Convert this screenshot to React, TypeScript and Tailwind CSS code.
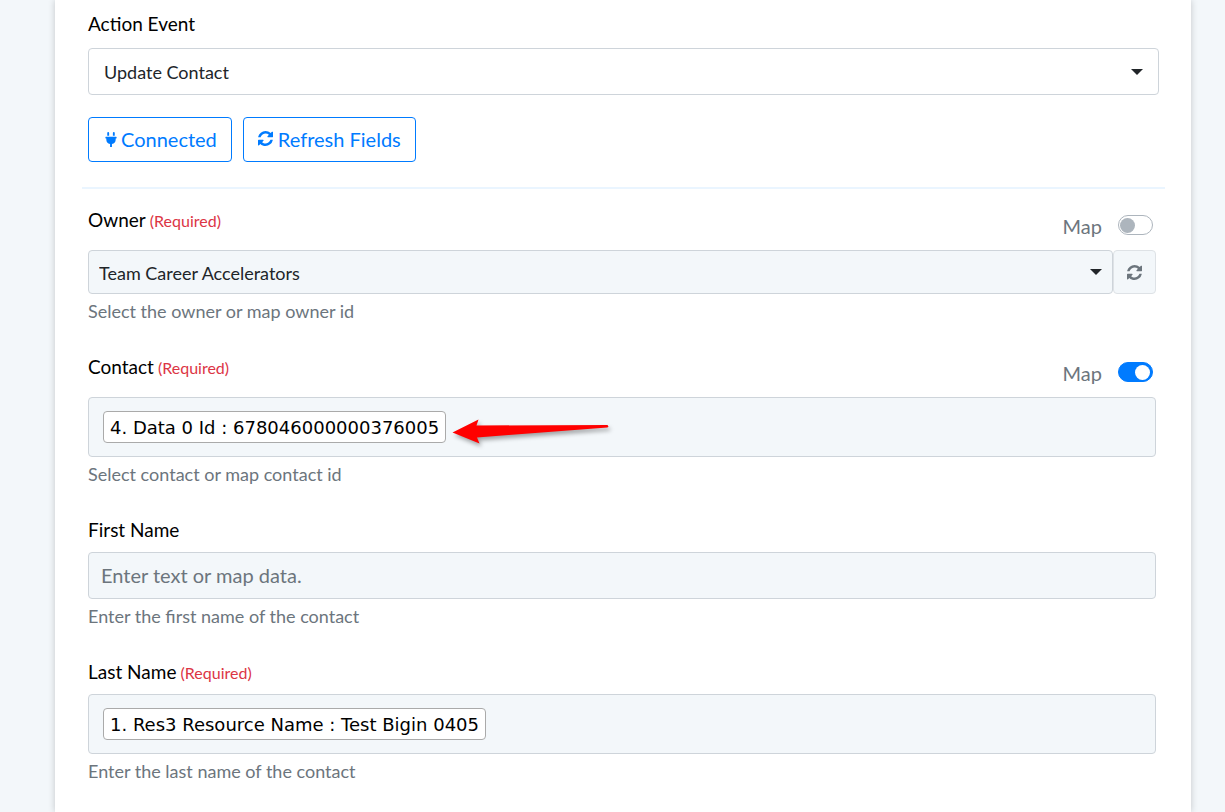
import { useState } from "react";
import type { ReactNode } from "react";
import { FaPlug } from "react-icons/fa";

function Caret({ className }: { className: string }) {
  return (
    <svg
      viewBox="0 0 12 6"
      className={`pointer-events-none absolute top-1/2 h-[6px] w-3 -translate-y-1/2 fill-[#212529] ${className}`}
      aria-hidden="true"
    >
      <path d="M0 0h12L6 6z" />
    </svg>
  );
}

function RefreshIcon() {
  return (
    <svg viewBox="0 0 1536 1536" className="size-[15px] shrink-0 fill-current" aria-hidden="true">
      <path d="M1511 928q0 5-1 7-64 268-268 434.500T764 1536q-146 0-282.500-55T238 1324l-129 129q-19 19-45 19t-45-19-19-45V960q0-26 19-45t45-19h448q26 0 45 19t19 45-19 45l-137 137q71 66 161 102t187 36q134 0 250-65t186-179q11-17 53-117 8-23 30-23h192q13 0 22.500 9.500t9.500 22.500zm25-800v448q0 26-19 45t-45 19h-448q-26 0-45-19t-19-45 19-45l138-138Q969 256 768 256q-134 0-250 65T332 500q-11 17-53 117-8 23-30 23H50q-13 0-22.500-9.500T18 608v-7q65-268 270-434.500T768 0q146 0 284 55.500T1297 212l130-129q19-19 45-19t45 19 19 45z" />
    </svg>
  );
}

function Arrow() {
  return (
    <svg
      viewBox="0 0 168 36"
      className="pointer-events-none absolute top-4 left-[360px] h-9 w-[168px] drop-shadow-[2px_3px_2px_rgba(0,0,0,0.35)]"
      aria-hidden="true"
    >
      <path
        d="M3.500 18.500 29.500 5.500 27.500 11.500 158.500 11 159.500 12.500 158.500 13.500 28 23.500 30.500 29.500z"
        fill="#ff0000"
      />
    </svg>
  );
}

function FieldLabel({
  htmlFor,
  required,
  children,
}: {
  htmlFor: string;
  required?: boolean;
  children: ReactNode;
}) {
  return (
    <label htmlFor={htmlFor} className="block text-[19px] leading-[25px] text-black">
      {children}
      {required && <span className="text-[16px] leading-none text-[#dc3545]"> (Required)</span>}
    </label>
  );
}

function MapToggle({ id, initial }: { id: string; initial: boolean }) {
  const [on, setOn] = useState(initial);

  return (
    <div className="mt-2 mr-[3px] flex h-5 items-center gap-4">
      <label htmlFor={id} className="pt-[2px] text-[20px] leading-5 text-[#6c757d]">
        Map
      </label>
      <input
        id={id}
        type="checkbox"
        checked={on}
        onChange={(e) => setOn(e.target.checked)}
        className="flex h-5 w-[35px] cursor-pointer appearance-none items-center rounded-full border border-[#adb5bd] bg-white px-px before:size-[15px] before:rounded-full before:bg-[#adb5bd] checked:justify-end checked:border-[#007bff] checked:bg-[#007bff] checked:px-[2px] checked:before:bg-white"
      />
    </div>
  );
}

function Help({ children }: { children: ReactNode }) {
  return <p className="mt-1 text-[18px] leading-[27px] text-[#6c757d]">{children}</p>;
}

function TagBox({ id, tag, children }: { id: string; tag: string; children?: ReactNode }) {
  return (
    <div className="relative flex h-[60px] items-center rounded border border-[#ced4da] bg-[#f3f7fa] px-[14px]">
      <span className="flex h-8 shrink-0 items-center rounded border border-[#aaaaaa] bg-white px-[6px] font-['DejaVu_Sans',sans-serif] text-[18px] whitespace-pre text-black">
        {tag}
      </span>
      <input id={id} type="text" className="h-full min-w-0 flex-1 bg-transparent outline-none" />
      {children}
    </div>
  );
}

export default function App() {
  return (
    <div className="min-h-screen bg-[#f3f7fa] pr-[34px] pl-[55px] font-[Lato,sans-serif]">
      <main className="min-h-screen bg-white pt-[11px] pb-6 shadow-[0_0_7px_rgba(0,0,0,0.2)]">
        <section className="pr-8 pl-[33px]">
          <FieldLabel htmlFor="action-event">Action Event</FieldLabel>
          <div className="relative mt-3">
            <select
              id="action-event"
              className="block h-[47px] w-full appearance-none rounded border border-[#ced4da] bg-white px-[15px] pt-[2px] text-[18px] text-[#212529]"
            >
              <option>Update Contact</option>
            </select>
            <Caret className="right-4" />
          </div>

          <div className="mt-[22px] flex gap-[11px]">
            <button
              type="button"
              className="flex h-[45px] items-center gap-[2px] rounded border border-[#007bff] px-[14px] pb-[2px] text-[20px] text-[#007bff]"
            >
              <FaPlug className="size-4 pt-px" />
              Connected
            </button>
            <button
              type="button"
              className="flex h-[45px] items-center gap-[5px] rounded border border-[#007bff] px-[14px] pb-[2px] text-[20px] text-[#007bff]"
            >
              <RefreshIcon />
              Refresh Fields
            </button>
          </div>
        </section>

        <hr className="mt-[25px] mr-[26px] ml-[27px] border-t-2 border-[#eaf5ff]" />

        <section className="flex flex-col gap-[29px] pt-[18px] pr-[35px] pl-[33px]">
          <div>
            <div className="flex h-[43px] items-start justify-between">
              <FieldLabel htmlFor="owner" required>
                Owner
              </FieldLabel>
              <MapToggle id="map-owner" initial={false} />
            </div>
            <div className="flex">
              <div className="relative flex-1">
                <select
                  id="owner"
                  className="block h-11 w-full appearance-none rounded border border-[#ced4da] bg-[#f3f7fa] px-[10px] pt-[2px] text-[18px] text-[#212529]"
                >
                  <option>Team Career Accelerators</option>
                </select>
                <Caret className="right-[11px]" />
              </div>
              <button
                type="button"
                aria-label="Refresh owners"
                className="flex h-11 w-[43px] items-center justify-center rounded border border-[#dee2e6] bg-[#f3f7fa] text-[#6c757d]"
              >
                <RefreshIcon />
              </button>
            </div>
            <Help>Select the owner or map owner id</Help>
          </div>

          <div>
            <div className="flex h-[43px] items-start justify-between">
              <FieldLabel htmlFor="contact" required>
                Contact
              </FieldLabel>
              <MapToggle id="map-contact" initial />
            </div>
            <TagBox id="contact" tag="4. Data 0 Id : 678046000000376005">
              <Arrow />
            </TagBox>
            <Help>Select contact or map contact id</Help>
          </div>

          <div>
            <FieldLabel htmlFor="first-name">First Name</FieldLabel>
            <input
              id="first-name"
              type="text"
              placeholder="Enter text or map data."
              className="mt-[10px] block h-[47px] w-full rounded border border-[#ced4da] bg-[#f3f7fa] px-3 pb-[2px] text-[20px] text-[#212529] placeholder:text-[#6c757d]"
            />
            <Help>Enter the first name of the contact</Help>
          </div>

          <div>
            <div className="mb-[10px]">
              <FieldLabel htmlFor="last-name" required>
                Last Name
              </FieldLabel>
            </div>
            <TagBox id="last-name" tag="1. Res3 Resource Name : Test Bigin 0405" />
            <Help>Enter the last name of the contact</Help>
          </div>
        </section>
      </main>
    </div>
  );
}
